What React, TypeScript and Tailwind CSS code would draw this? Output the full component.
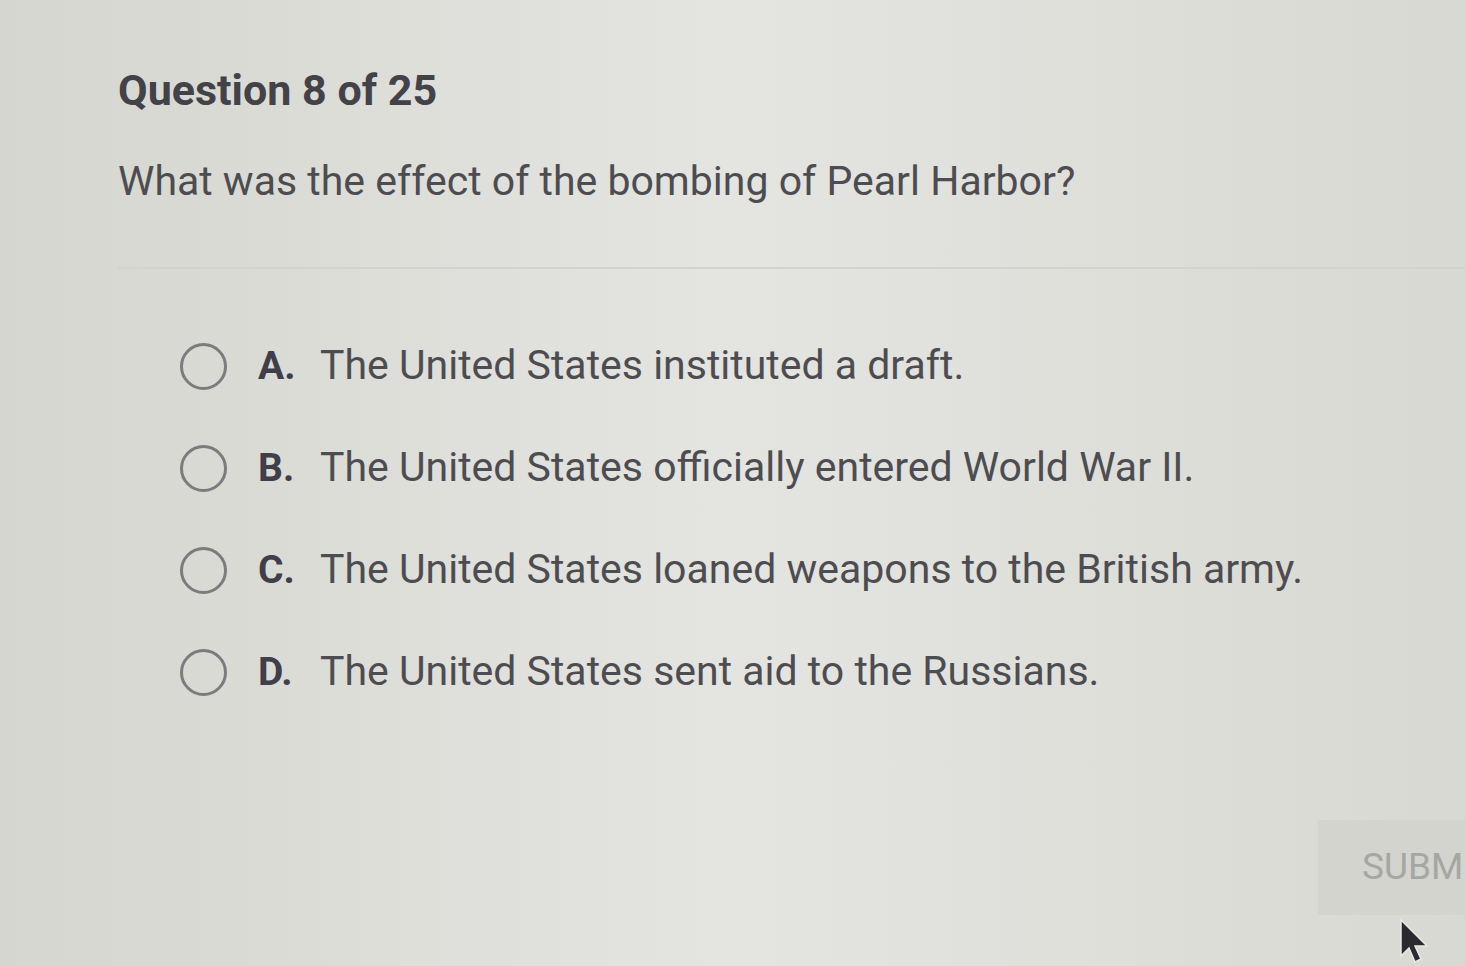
import React from 'react';

const options = [
  { letter: 'A.', text: 'The United States instituted a draft.' },
  { letter: 'B.', text: 'The United States officially entered World War II.' },
  { letter: 'C.', text: 'The United States loaned weapons to the British army.' },
  { letter: 'D.', text: 'The United States sent aid to the Russians.' },
];

export default function App() {
  return (
    <div
      className="relative w-[1465px] h-[966px] overflow-hidden bg-gradient-to-r from-[#d6d6d0] via-[#e4e4e1] to-[#d9d9d3] text-[#4b4b4d]"
      style={{ fontFamily: 'Roboto, "Liberation Sans", sans-serif' }}
    >
      <div className="flex flex-col pt-[63px]">
        <h1 className="pl-[118px] text-[43px] leading-[54px] font-bold text-[#424248]">Question 8 of 25</h1>
        <p className="pl-[118px] mt-[38px] text-[41px] leading-[52px] text-[#4d4d51]">
          What was the effect of the bombing of Pearl Harbor?
        </p>
        <div className="ml-[118px] mt-[60px] h-[2px] bg-[#d2d2cf]" />
        <div className="flex flex-col gap-[52px] pl-[180px] mt-[72px]">
          {options.map((o) => (
            <div key={o.letter} className="flex items-center h-[50px]">
              <span className="w-[47px] h-[47px] rounded-full border-[3px] border-[#7d7b7d] shrink-0" />
              <span className="ml-[31px] w-[62px] text-[39px] font-bold text-[#3f3e4a]">{o.letter}</span>
              <span className="text-[41px] text-[#4d4d51]">{o.text}</span>
            </div>
          ))}
        </div>
      </div>
      <div className="absolute left-[1318px] top-[820px] w-[147px] h-[95px] bg-[#d3d4ce] overflow-hidden">
        <span className="absolute left-[44px] top-[26px] text-[37px] leading-[42px] text-[#a6a7a2] whitespace-nowrap">SUBM</span>
      </div>
      <svg className="absolute left-[1398px] top-[918px]" width="34" height="46" viewBox="0 0 34 46">
        <path d="M3 2 L3 38 L11 30 L17 44 L23 41 L17 28 L29 28 Z" fill="#2a2a30" stroke="#e8e8e6" strokeWidth="1.5" />
      </svg>
    </div>
  );
}
